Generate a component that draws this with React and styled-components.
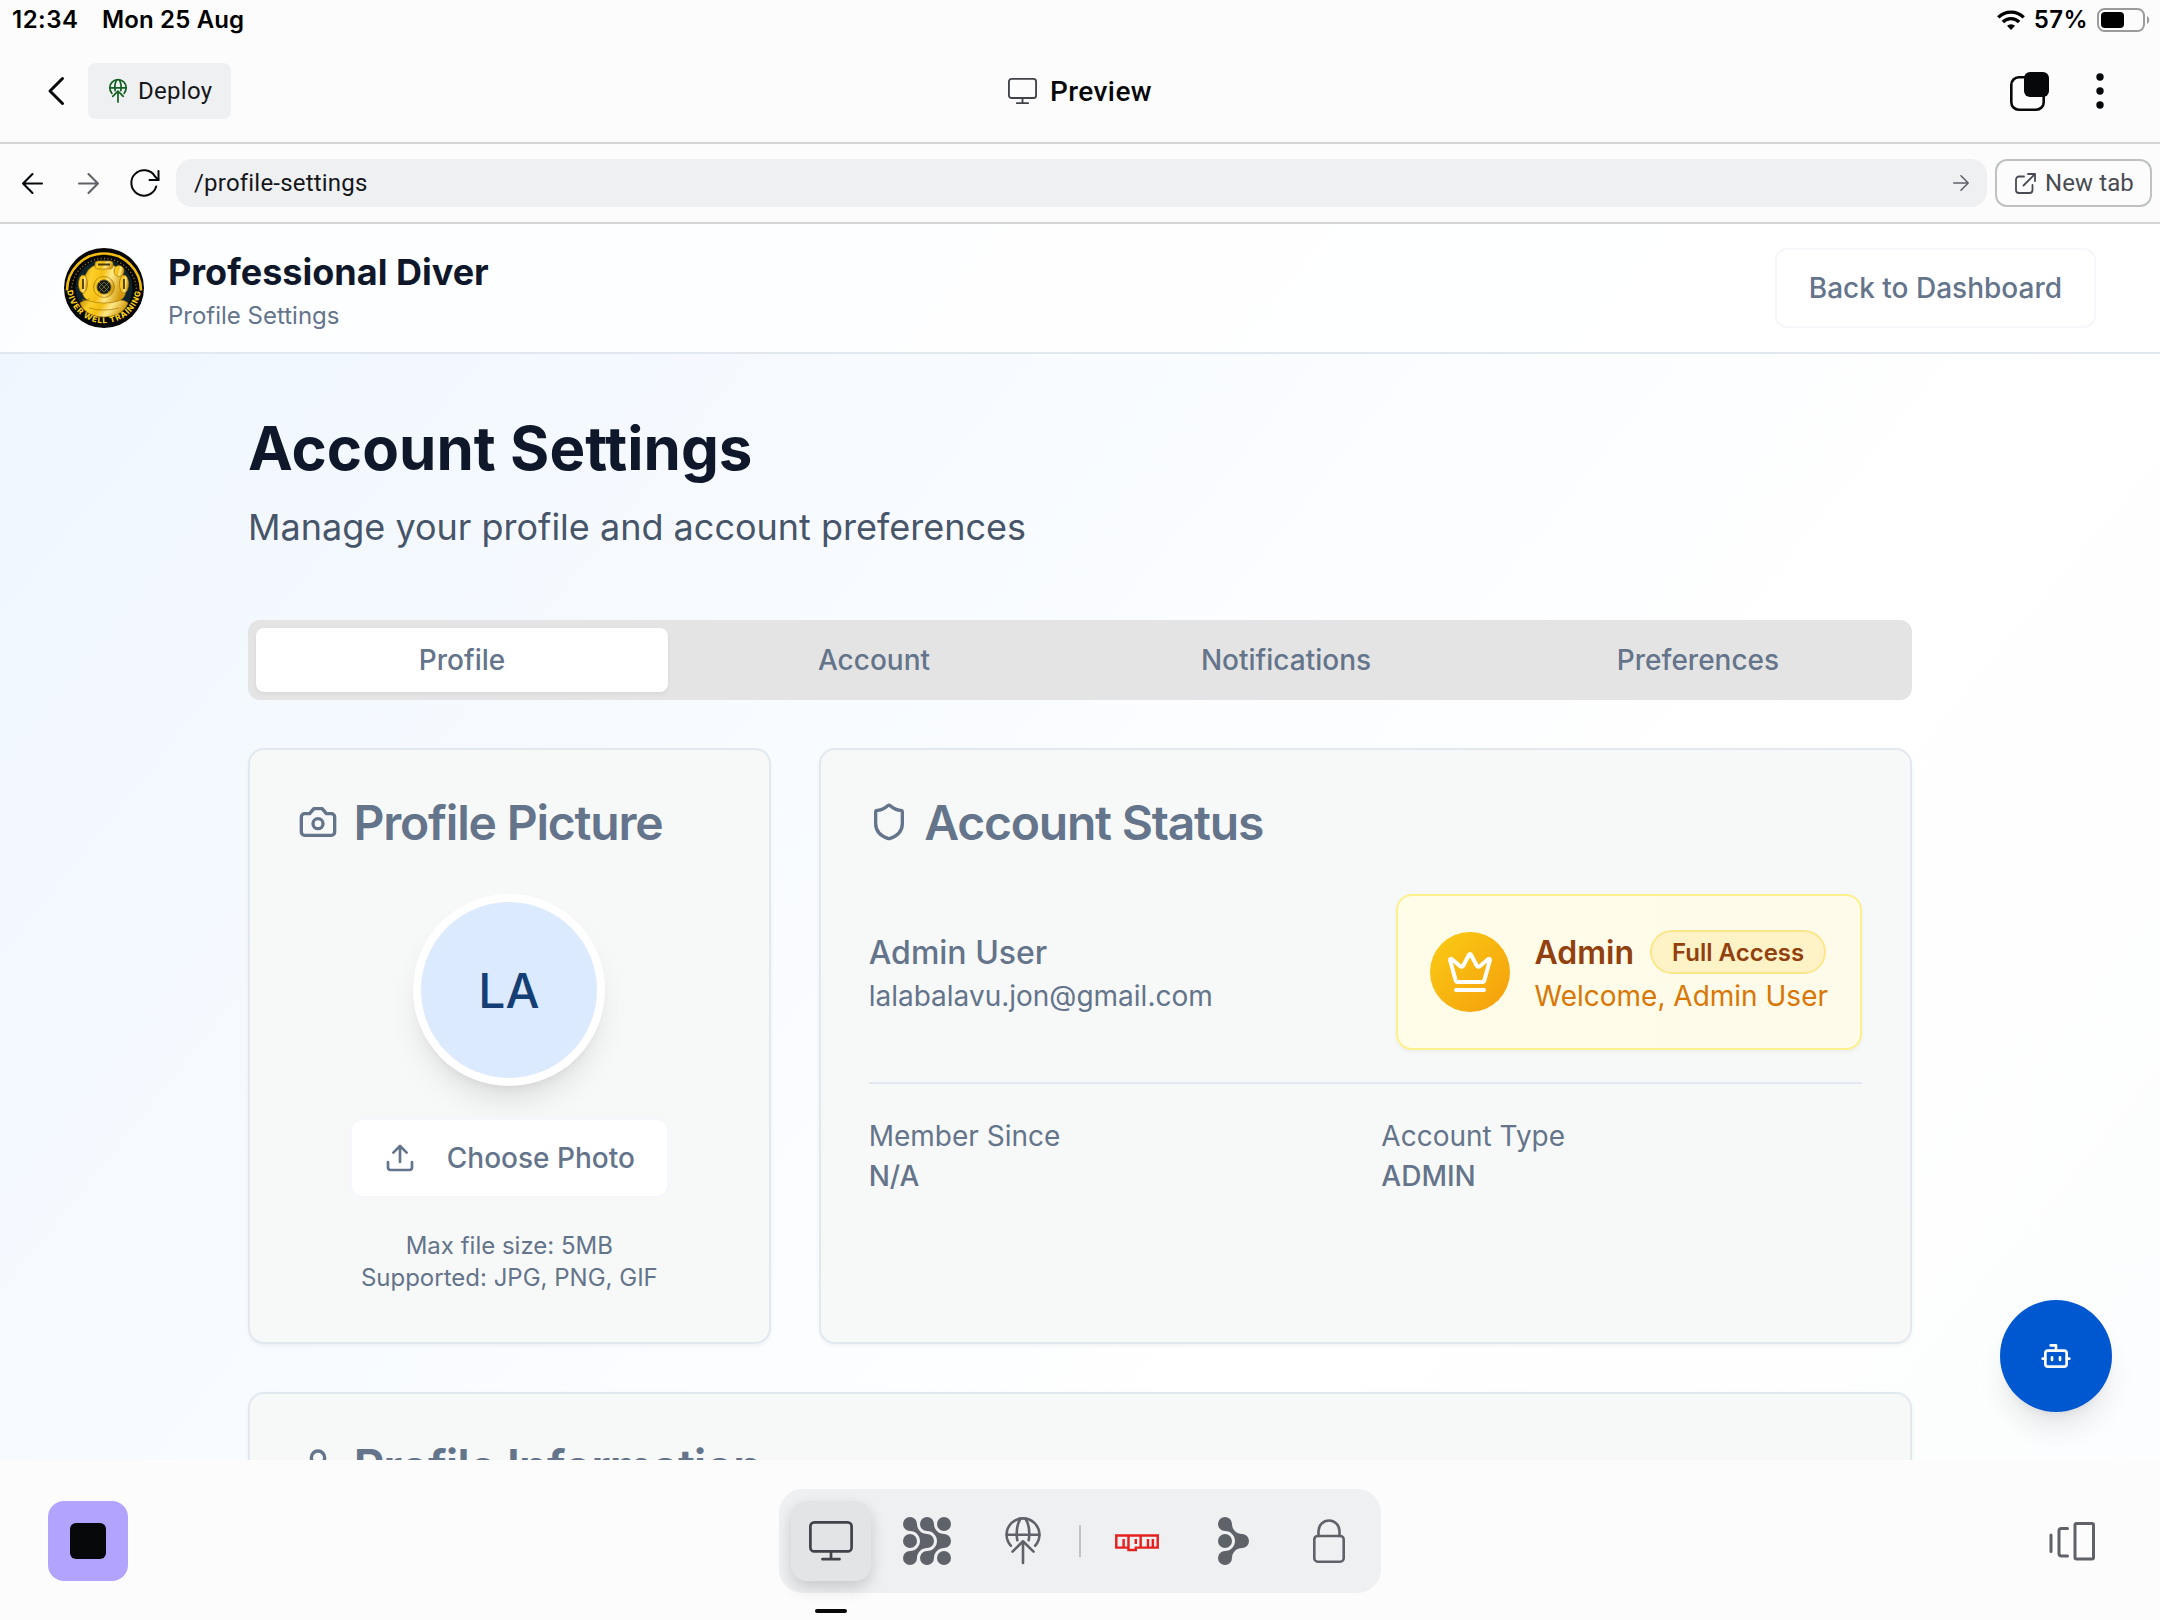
import React from "react";
import styled, { createGlobalStyle, css } from "styled-components";
import { FaNpm } from "react-icons/fa";

const ui = `Roboto, "Liberation Sans", sans-serif`;
const inter = `Inter, "Liberation Sans", sans-serif`;
const slate = "#64748b";
const line = "#e2e8f0";
const grayIcon = "#5f6269";

const Global = createGlobalStyle`
  *, *::before, *::after { box-sizing: border-box; }
  body { margin: 0; background: #fcfcfc; font-family: ${inter}; }
  h1, h2, p { margin: 0; }
  button { font: inherit; color: inherit; margin: 0; padding: 0; border: 0; background: none; }
  svg { display: block; flex: none; overflow: visible; }
`;

const Screen = styled.div`
  width: 2160px;
  height: 1620px;
  display: flex;
  flex-direction: column;
  overflow: hidden;
  background: #fcfcfc;
`;

/* ---------- device chrome ---------- */

const StatusBar = styled.div`
  height: 40px;
  flex: none;
  display: flex;
  align-items: center;
  justify-content: space-between;
  padding: 0 10px 0 12px;
  font: 600 24px/40px ${inter};
  color: #000;
`;

const StatusGroup = styled.div`
  display: flex;
  align-items: center;
  gap: ${(p) => p.$gap}px;
`;

const StatusText = styled.span`
  letter-spacing: ${(p) => p.$track || 0}px;
`;

const TopBar = styled.header`
  height: 104px;
  flex: none;
  display: grid;
  grid-template-columns: 1fr auto 1fr;
  align-items: center;
  padding: 0 36px;
  border-bottom: 2px solid #d3d4d5;
  font-family: ${ui};
`;

const TopSide = styled.div`
  display: flex;
  align-items: center;
  justify-content: ${(p) => (p.$end ? "flex-end" : "flex-start")};
  gap: ${(p) => (p.$end ? 27 : 12)}px;
`;

const IconButton = styled.button`
  width: ${(p) => p.$w || 40}px;
  height: ${(p) => p.$h || 56}px;
  display: flex;
  align-items: center;
  justify-content: center;
  color: ${(p) => p.$color || "#07080a"};
`;

const DeployButton = styled.button`
  height: 56px;
  width: 143px;
  display: flex;
  align-items: center;
  gap: 11px;
  padding-left: 21px;
  border-radius: 8px;
  background: #eff0f2;
  font-size: 24px;
  letter-spacing: 0.3px;
  color: #15171a;
`;

const ScreenTitle = styled.div`
  display: flex;
  align-items: center;
  gap: 13px;
  font-size: 28px;
  font-weight: 500;
  letter-spacing: 0.4px;
  color: #07080a;
`;

const AddressRow = styled.div`
  height: 80px;
  flex: none;
  display: flex;
  align-items: center;
  padding: 0 8px 0 4px;
  border-bottom: 2px solid #d3d4d5;
  font-family: ${ui};
`;

const Address = styled.div`
  flex: 1;
  height: 48px;
  margin: 0 8px 0 4px;
  padding: 0 18px;
  display: flex;
  align-items: center;
  justify-content: space-between;
  border-radius: 16px;
  background: #eff0f2;
  font-size: 24px;
  letter-spacing: 0.2px;
  color: #15171a;
`;

const NewTab = styled.button`
  width: 157px;
  height: 48px;
  display: flex;
  align-items: center;
  gap: 9px;
  padding-left: 18px;
  border: 2px solid #bfc2c3;
  border-radius: 12px;
  font-size: 24px;
  letter-spacing: 0.1px;
  color: #484b52;
`;

/* ---------- previewed page ---------- */

const Page = styled.div`
  position: relative;
  flex: 1;
  min-height: 0;
  overflow: hidden;
  background: linear-gradient(to bottom right, #eff6ff, #ffffff 50%, #f8fafc) top / 2160px 2700px no-repeat;
`;

const PageHeader = styled.div`
  height: 130px;
  display: flex;
  align-items: center;
  justify-content: space-between;
  padding: 0 64px;
  border-bottom: 2px solid ${line};
  background: rgba(255, 255, 255, 0.8);
`;

const Brand = styled.div`
  display: flex;
  align-items: center;
  gap: 24px;
`;

const BrandName = styled.div`
  padding-top: 3px;
  font-size: 36px;
  line-height: 52px;
  font-weight: 700;
  color: #0f172a;
`;

const BrandNote = styled.div`
  font-size: 24px;
  line-height: 36px;
  color: ${slate};
`;

const OutlineButton = styled.button`
  height: 80px;
  display: flex;
  align-items: center;
  gap: 31px;
  padding: 0 32px;
  border: 2px solid #f6f6fb;
  background-color: #fff;
  background-clip: padding-box;
  border-radius: 12px;
  font-size: 28px;
  font-weight: 500;
  color: ${slate};
`;

const Container = styled.main`
  width: 1664px;
  margin: 0 auto;
  padding-top: 58px;
`;

const Heading = styled.h1`
  font-size: 60px;
  line-height: 72px;
  font-weight: 700;
  letter-spacing: 0.05px;
  color: #0f172a;
`;

const Lead = styled.p`
  margin-top: 15px;
  font-size: 36px;
  line-height: 56px;
  color: #475569;
`;

const TabList = styled.div`
  height: 80px;
  margin: 65px 0 48px;
  padding: 8px;
  display: grid;
  grid-template-columns: repeat(4, 1fr);
  border-radius: 12px;
  background: #e4e4e4;
`;

const Tab = styled.button`
  border-radius: 8px;
  font-size: 28px;
  font-weight: 500;
  color: ${slate};
  ${(p) =>
    p.$active &&
    css`
      background: #fff;
      box-shadow: 0 2px 4px rgba(0, 0, 0, 0.06);
    `}
`;

const CardGrid = styled.div`
  display: grid;
  grid-template-columns: repeat(3, 1fr);
  gap: 48px;
`;

const Card = styled.section`
  grid-column: span ${(p) => p.$span || 1};
  min-height: ${(p) => p.$min || 0}px;
  padding: 48px;
  border: 2px solid ${line};
  border-radius: 16px;
  background: #f7f9f8;
  box-shadow: 0 2px 4px rgba(0, 0, 0, 0.05);
  color: ${slate};
`;

const CardTitle = styled.h2`
  height: 48px;
  display: flex;
  align-items: center;
  gap: 15.5px;
  font-size: 48px;
  line-height: 48px;
  font-weight: 600;
  letter-spacing: -1.2px;
`;

const TitleText = styled.span`
  padding-top: 2px;
`;

const PictureBody = styled.div`
  margin-top: 48px;
  display: flex;
  flex-direction: column;
  align-items: center;
  gap: 32px;
`;

const Avatar = styled.div`
  width: 192px;
  height: 192px;
  display: flex;
  align-items: center;
  justify-content: center;
  padding-right: 1px;
  border: 8px solid #fff;
  border-radius: 50%;
  background: #dbeafe;
  box-shadow: 0 20px 30px -6px rgba(0, 0, 0, 0.1), 0 8px 12px -8px rgba(0, 0, 0, 0.1);
  font-size: 48px;
  font-weight: 500;
  color: #153e75;
`;

const Hint = styled.p`
  text-align: center;
  font-size: 24px;
  line-height: 32px;
`;

const StatusRow = styled.div`
  margin-top: 48px;
  padding-bottom: 32px;
  border-bottom: 2px solid ${line};
  display: flex;
  align-items: center;
  justify-content: space-between;
`;

const Name = styled.div`
  height: 48px;
  padding-top: 1px;
  font-size: 32px;
  line-height: 48px;
  font-weight: ${(p) => (p.$strong ? 600 : 500)};
`;

const Small = styled.div`
  font-size: 28px;
  line-height: 40px;
  font-weight: ${(p) => (p.$strong ? 500 : 400)};
  color: ${(p) => p.$color || slate};
`;

const AdminPanel = styled.div`
  height: 156px;
  display: flex;
  align-items: center;
  gap: 24px;
  padding: 0 32px;
  border: 2px solid #fef08a;
  border-radius: 16px;
  background: linear-gradient(to right, #fffce8, #fffbeb);
  box-shadow: 0 2px 4px rgba(0, 0, 0, 0.05);
  color: #92400e;
`;

const CrownDisc = styled.div`
  width: 80px;
  height: 80px;
  display: flex;
  align-items: center;
  justify-content: center;
  border-radius: 50%;
  background: linear-gradient(to bottom right, #facc15, #f59e0b);
  color: #fff;
`;

const AdminLine = styled.div`
  height: 48px;
  display: flex;
  align-items: center;
  gap: 16px;
`;

const Badge = styled.span`
  height: 44px;
  padding: 0 20px;
  display: flex;
  align-items: center;
  border: 2px solid #fde68a;
  border-radius: 22px;
  background: #fef3c7;
  font-size: 24px;
  font-weight: 600;
`;

const Facts = styled.div`
  margin-top: 32px;
  display: grid;
  grid-template-columns: 1fr 1fr;
  gap: 32px;
`;

const ChatButton = styled.button`
  position: absolute;
  right: 48px;
  bottom: 48px;
  width: 112px;
  height: 112px;
  display: flex;
  align-items: center;
  justify-content: center;
  border-radius: 50%;
  background: #0058d0;
  color: #fff;
  box-shadow: 0 20px 30px -6px rgba(0, 0, 0, 0.1), 0 8px 12px -8px rgba(0, 0, 0, 0.1);
`;

/* ---------- bottom dock ---------- */

const BottomBar = styled.footer`
  height: 160px;
  flex: none;
  display: grid;
  grid-template-columns: 1fr auto 1fr;
  align-items: center;
  padding: 2px 48px 0;
`;

const StopButton = styled.button`
  width: 80px;
  height: 80px;
  display: flex;
  align-items: center;
  justify-content: center;
  border-radius: 16px;
  background: #b1a3fe;
`;

const StopMark = styled.span`
  width: 36px;
  height: 36px;
  border-radius: 6px;
  background: #07080a;
`;

const Dock = styled.nav`
  height: 104px;
  display: flex;
  align-items: center;
  gap: 16px;
  padding: 0 12px;
  border-radius: 24px;
  background: #eff0f2;
`;

const DockItem = styled.button`
  position: relative;
  width: 80px;
  height: 80px;
  display: flex;
  align-items: center;
  justify-content: center;
  border-radius: 16px;
  color: ${(p) => p.$color || grayIcon};
  ${(p) =>
    p.$active &&
    css`
      background: #e3e4e6;
      color: #41434a;
      box-shadow: 0 8px 16px rgba(7, 8, 10, 0.13), 0 2px 16px rgba(7, 8, 10, 0.04);
      &::after {
        content: "";
        position: absolute;
        left: 24px;
        top: 108px;
        width: 32px;
        height: 4px;
        border-radius: 2px;
        background: #07080a;
      }
    `}
`;

const DockRule = styled.span`
  width: 2px;
  height: 32px;
  background: #c0c2c5;
`;

const NpmMark = styled(FaNpm)`
  width: 44px;
  height: 39px;
`;

const RightEnd = styled.div`
  display: flex;
  justify-content: flex-end;
  padding-right: 17px;
`;

/* ---------- icons ---------- */

const Icon = ({ w = 24, h = w, size = w, vh = h, stroke = 2, color = "currentColor", children }) => (
  <svg width={size} height={(size * vh) / w} viewBox={`0 0 ${w} ${h}`} fill="none" stroke={color} strokeWidth={stroke} strokeLinecap="round" strokeLinejoin="round">
    {children}
  </svg>
);

const MonitorIcon = ({ size, stroke, color }) => (
  <Icon w={44} h={40} size={size} stroke={stroke} color={color}>
    <rect x="1.4" y="1.4" width="41.2" height="29" rx="4" />
    <path d="M22 31v7M13.5 38.2h17" />
  </Icon>
);

const GlobeUpIcon = ({ size, color, stroke = 2.6 }) => (
  <Icon w={36} h={48} size={size} stroke={stroke} color={color}>
    <path d="M5.800 28.700A16.400 16.400 0 1 1 30.200 28.700" />
    <path d="M1.700 17.700h32.600" />
    <path d="M15.500 1.800C12.500 6.500 10.800 14 12.300 23.300M20.500 1.800C23.500 6.500 25.200 14 23.700 23.300" />
    <path d="M18 46V24.300M7.500 34.600L18 24.300l10.500 10.300" />
  </Icon>
);

const swoosh =
  "M7 0a7 7 0 0 1 7 7c0 6 5 10 10 10a7 7 0 0 1 0 14c-5 0-10 4-10 10a7 7 0 1 1-7-7c6 0 10-5 10-10s-4-10-10-10a7 7 0 0 1 0-14z";

const AgentIcon = () => (
  <svg width="48" height="48" viewBox="0 0 48 48" fill="currentColor">
    <path d={swoosh} />
    <path d={swoosh} transform="translate(17 0)" />
    <circle cx="7" cy="24" r="7" />
    <circle cx="41" cy="7" r="7" />
    <circle cx="41" cy="41" r="7" />
  </svg>
);

const BranchIcon = () => (
  <svg width="31" height="48" viewBox="0 0 31 48" fill="currentColor">
    <path d={swoosh} />
    <circle cx="7" cy="24" r="7" />
  </svg>
);

const WifiIcon = () => (
  <svg width="28" height="20" viewBox="0 0 28 20" fill="none" stroke="#000" strokeWidth="3.4">
    <path d="M1.300 7.400a18 18 0 0 1 25.400 0" />
    <path d="M5.900 12a11.500 11.500 0 0 1 16.200 0" />
    <path d="M14 20l-4-4.200a5.800 5.800 0 0 1 8 0z" fill="#000" stroke="none" />
  </svg>
);

const BatteryIcon = () => (
  <svg width="53" height="24" viewBox="0 0 53 24" fill="none">
    <rect x="1" y="1" width="46" height="22" rx="6.500" stroke="#9b9b9b" strokeWidth="2" />
    <rect x="4" y="4" width="23" height="16" rx="4" fill="#000" />
    <path d="M50 8v8c3-1.500 3-6.500 0-8z" fill="#9b9b9b" />
  </svg>
);

const Crest = () => (
  <svg width="80" height="80" viewBox="0 0 80 80">
    <defs>
      <linearGradient id="brass" x1="0" x2="1" y1="0" y2="0.25">
        <stop offset="0" stopColor="#c8920c" />
        <stop offset="0.25" stopColor="#fbd02a" />
        <stop offset="0.5" stopColor="#f5be12" />
        <stop offset="0.7" stopColor="#ffe98a" />
        <stop offset="1" stopColor="#d39b0c" />
      </linearGradient>
      <path id="crest-arc" d="M2.800 38a37.200 37.200 0 0 0 74.400 0" />
    </defs>
    <circle cx="40" cy="40" r="40" fill="#060606" />
    <path d="M3 42.500a37 37 0 1 1 74 0" fill="none" stroke="#f2bd12" strokeWidth="2.600" />
    <circle cx="40" cy="40" r="28.500" fill="#10222b" />
    <path d="M7.500 43a32.500 32.500 0 1 1 65 0" fill="none" stroke="#8d7424" strokeWidth="1.300" strokeDasharray="1.200 2.200" />
    <g stroke="#a87a0a" strokeWidth="0.700">
      <path d="M16 55q3-3 9-3h30q6 0 9 3-3 8-11 11.500-13 5-26 0Q19 63 16 55z" fill="url(#brass)" />
      <path d="M22 26q4-10 18-10t18 10q5 10 3 21-3 8-21 8T19 47q-2-11 3-21z" fill="url(#brass)" />
      <rect x="31" y="13" width="18" height="8" rx="3" fill="url(#brass)" />
      <ellipse cx="19" cy="36" rx="4.500" ry="9" fill="url(#brass)" />
      <ellipse cx="60" cy="36" rx="4.500" ry="9" fill="url(#brass)" />
      <ellipse cx="55" cy="23" rx="5" ry="5.500" fill="url(#brass)" />
      <circle cx="40" cy="39" r="10.500" fill="url(#brass)" />
      <circle cx="40" cy="39" r="7.200" fill="#0d1d26" />
      <path d="M35 39l5-5 5 5-5 5zM35 34l10 10M45 34L35 44" fill="none" />
      <path d="M18 51q4 3 8-1M25 60q15 4 30 0" fill="none" />
      <path d="M34 16.500h12M19 31v10M60 31v10" stroke="#4a3a0c" strokeWidth="1.800" />
    </g>
    <text fill="#f7cf1a" fontFamily={inter} fontSize="8" fontWeight="800" letterSpacing="0.900">
      <textPath href="#crest-arc" startOffset="50%" textAnchor="middle">DIVER WELL TRAINING</textPath>
    </text>
  </svg>
);

const Arrow = ({ size = 21, stroke = 2, flip, color }) => (
  <Icon w={20} size={size} stroke={stroke} color={color}>
    <path d={flip ? "M19 10H1M10 1l-9 9 9 9" : "M1 10h18M10 1l9 9-9 9"} />
  </Icon>
);

const tabs = ["Profile", "Account", "Notifications", "Preferences"];

export default function App() {
  return (
    <Screen>
      <Global />
      <StatusBar>
        <StatusGroup $gap={23.5}>
          <StatusText $track={0.5}>12:34</StatusText>
          <StatusText $track={0.15}>Mon 25 Aug</StatusText>
        </StatusGroup>
        <StatusGroup $gap={9}>
          <WifiIcon />
          <StatusText $track={0.4}>57%</StatusText>
          <BatteryIcon />
        </StatusGroup>
      </StatusBar>

      <TopBar>
        <TopSide>
          <IconButton $w={40}>
            <Icon w={16} h={28} stroke={3}>
              <path d="M14.500 1.500L2 14l12.500 12.500" />
            </Icon>
          </IconButton>
          <DeployButton>
            <GlobeUpIcon size={18} color="#135e22" stroke={3.4} />
            Deploy
          </DeployButton>
        </TopSide>
        <ScreenTitle>
          <MonitorIcon size={29} stroke={2.8} color="#41434a" />
          Preview
        </ScreenTitle>
        <TopSide $end>
          <IconButton>
            <svg width="39" height="39" viewBox="0 0 39 39">
              <rect x="1.300" y="5.300" width="32.400" height="32.400" rx="7.500" fill="none" stroke="#07080a" strokeWidth="2.600" />
              <rect x="14" y="0" width="25" height="25" rx="6" fill="#07080a" />
            </svg>
          </IconButton>
          <IconButton $w={48}>
            <svg width="8" height="36" viewBox="0 0 8 36" fill="#07080a">
              <circle cx="4" cy="4" r="3.700" />
              <circle cx="4" cy="18" r="3.700" />
              <circle cx="4" cy="32" r="3.700" />
            </svg>
          </IconButton>
        </TopSide>
      </TopBar>

      <AddressRow>
        <IconButton $w={56}>
          <Arrow flip />
        </IconButton>
        <IconButton $w={56} $color={grayIcon}>
          <Arrow />
        </IconButton>
        <IconButton $w={56}>
          <Icon w={30} h={28} stroke={2}>
            <path d="M27.200 17.500A12.700 12.700 0 1 1 26 7.500L29.500 11" />
            <path d="M29.500 2v9h-9" />
          </Icon>
        </IconButton>
        <Address>
          /profile-settings
          <Arrow size={16} color={grayIcon} stroke={2} />
        </Address>
        <NewTab>
          <Icon w={21} h={21} stroke={1.800}>
            <path d="M9 3.500H4A3 3 0 0 0 1 6.500V17a3 3 0 0 0 3 3h10.500a3 3 0 0 0 3-3v-5" />
            <path d="M13 1h7v7M20 1L8.500 12.500" />
          </Icon>
          New tab
        </NewTab>
      </AddressRow>

      <Page>
        <PageHeader>
          <Brand>
            <Crest />
            <div>
              <BrandName>Professional Diver</BrandName>
              <BrandNote>Profile Settings</BrandNote>
            </div>
          </Brand>
          <OutlineButton>Back to Dashboard</OutlineButton>
        </PageHeader>

        <Container>
          <Heading>Account Settings</Heading>
          <Lead>Manage your profile and account preferences</Lead>
          <TabList>
            {tabs.map((t, i) => (
              <Tab key={t} $active={i === 0}>{t}</Tab>
            ))}
          </TabList>

          <CardGrid>
            <Card>
              <CardTitle>
                <Icon size={40}>
                  <path d="M14.500 4h-5L7 7H4a2 2 0 0 0-2 2v9a2 2 0 0 0 2 2h16a2 2 0 0 0 2-2V9a2 2 0 0 0-2-2h-3l-2.500-3z" />
                  <circle cx="12" cy="13" r="3" />
                </Icon>
                <TitleText>Profile Picture</TitleText>
              </CardTitle>
              <PictureBody>
                <Avatar>LA</Avatar>
                <OutlineButton>
                  <Icon size={32}>
                    <path d="M21 15v4a2 2 0 0 1-2 2H5a2 2 0 0 1-2-2v-4M17 8l-5-5-5 5M12 3v12" />
                  </Icon>
                  Choose Photo
                </OutlineButton>
                <Hint>
                  Max file size: 5MB
                  <br />
                  Supported: JPG, PNG, GIF
                </Hint>
              </PictureBody>
            </Card>

            <Card $span={2}>
              <CardTitle>
                <Icon size={40}>
                  <path d="M20 13c0 5-3.500 7.500-7.660 8.950a1 1 0 0 1-.67-.01C7.500 20.500 4 18 4 13V6a1 1 0 0 1 1-1c2 0 4.500-1.200 6.240-2.720a1.170 1.170 0 0 1 1.520 0C14.510 3.810 17 5 19 5a1 1 0 0 1 1 1z" />
                </Icon>
                <TitleText>Account Status</TitleText>
              </CardTitle>
              <StatusRow>
                <div>
                  <Name>Admin User</Name>
                  <Small>lalabalavu.jon@gmail.com</Small>
                </div>
                <AdminPanel>
                  <CrownDisc>
                    <Icon size={48}>
                      <path d="M11.562 3.266a.5.5 0 0 1 .876 0L15.390 8.870a1 1 0 0 0 1.516.294L21.183 5.500a.5.5 0 0 1 .798.519l-2.834 10.246a1 1 0 0 1-.956.734H5.810a1 1 0 0 1-.957-.734L2.020 6.020a.5.5 0 0 1 .798-.519l4.276 3.664a1 1 0 0 0 1.516-.294zM5 21h14" />
                    </Icon>
                  </CrownDisc>
                  <div>
                    <AdminLine>
                      <Name $strong>Admin</Name>
                      <Badge>Full Access</Badge>
                    </AdminLine>
                    <Small $color="#d97706">Welcome, Admin User</Small>
                  </div>
                </AdminPanel>
              </StatusRow>
              <Facts>
                <div>
                  <Small>Member Since</Small>
                  <Small $strong>N/A</Small>
                </div>
                <div>
                  <Small>Account Type</Small>
                  <Small $strong>ADMIN</Small>
                </div>
              </Facts>
            </Card>

            <Card $span={3} $min={600}>
              <CardTitle>
                <Icon size={40}>
                  <path d="M19 21v-2a4 4 0 0 0-4-4H9a4 4 0 0 0-4 4v2" />
                  <circle cx="12" cy="7" r="4" />
                </Icon>
                <TitleText>Profile Information</TitleText>
              </CardTitle>
            </Card>
          </CardGrid>
        </Container>

        <ChatButton>
          <Icon size={32}>
            <path d="M12 8V4H8M2 14h2M20 14h2M15 13v2M9 13v2" />
            <rect x="4" y="8" width="16" height="12" rx="2" />
          </Icon>
        </ChatButton>
      </Page>

      <BottomBar>
        <StopButton>
          <StopMark />
        </StopButton>
        <Dock>
          <DockItem $active>
            <MonitorIcon size={44} stroke={2.7} />
          </DockItem>
          <DockItem>
            <AgentIcon />
          </DockItem>
          <DockItem>
            <GlobeUpIcon size={36} />
          </DockItem>
          <DockRule />
          <DockItem $color="#e5201f">
            <NpmMark />
          </DockItem>
          <DockItem>
            <BranchIcon />
          </DockItem>
          <DockItem>
            <Icon w={32} h={44} stroke={2.600}>
              <rect x="1.300" y="17" width="29.400" height="25.700" rx="3.500" />
              <path d="M5.500 17v-5a10.500 10.500 0 0 1 21 0v5" />
            </Icon>
          </DockItem>
        </Dock>
        <RightEnd>
          <Icon w={46} h={40} stroke={3} color={grayIcon}>
            <rect x="26" y="2.500" width="18.500" height="35.500" rx="1.500" />
            <path d="M18.500 7.500h-6a2.500 2.500 0 0 0-2.500 2.500v22.500a2.500 2.500 0 0 0 2.500 2.500h6M2 14v16.500" />
          </Icon>
        </RightEnd>
      </BottomBar>
    </Screen>
  );
}
